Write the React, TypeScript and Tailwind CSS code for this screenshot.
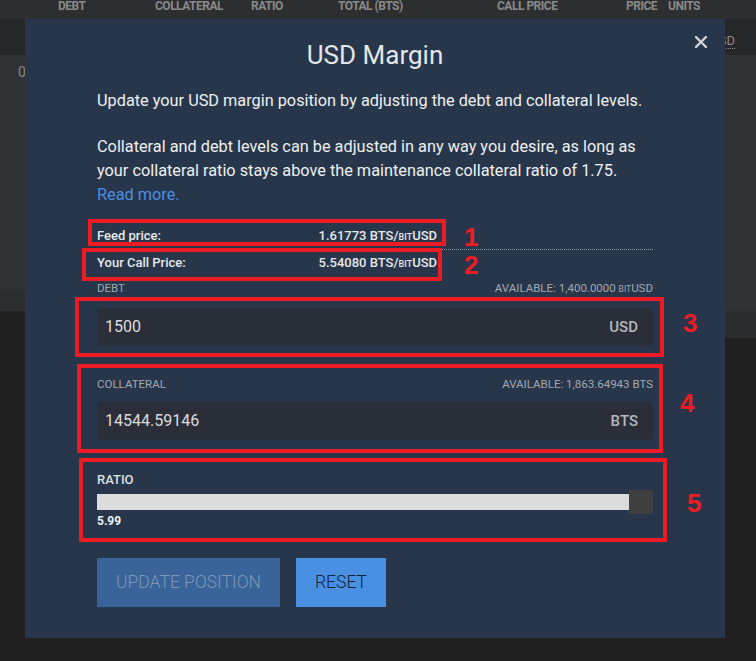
export default function App() {
  const headers: [string, number][] = [
    ["DEBT", 97],
    ["COLLATERAL", 96],
    ["RATIO", 87],
    ["TOTAL (BTS)", 159],
    ["CALL PRICE", 129],
    ["PRICE", 42],
    ["UNITS", 60],
  ];
  return (
    <div className="relative w-[756px] h-[661px] overflow-hidden bg-[#212121] font-['Roboto','Liberation_Sans',sans-serif]">
      {/* background page */}
      <div className="h-[19px] bg-[#2c2e30] flex pl-[58px] text-[12px] leading-[12px] font-bold tracking-[-0.5px] text-[#8a8a8a]">
        {headers.map(([h, w]) => (
          <div key={h} style={{ width: w }} className="shrink-0">
            {h}
          </div>
        ))}
      </div>
      <div className="h-[36px] bg-[#262728] flex justify-end pr-[21px] pt-[14px]">
        <span className="text-[13px] leading-[15px] h-[16px] text-[#8a8a8a] border-b border-dotted border-[#8a8a8a]">USD</span>
      </div>
      <div className="flex h-[283px]">
        <div className="w-[25px] flex flex-col">
          <div className="h-[235px] bg-[#2f3134] pl-[18px] pt-[9px] text-[14px] leading-[16px] text-[#8a8a8a]">0</div>
          <div className="h-[21px] bg-[#2b2d2f]" />
        </div>
        <div className="flex-1 bg-[#2f3134]" />
        <div className="w-[31px] flex flex-col">
          <div className="h-[256px] bg-[#2f3134]" />
          <div className="h-[27px] bg-[#2a2c2e]" />
        </div>
      </div>

      {/* modal */}
      <div className="absolute left-[25px] top-[19px] w-[700px] h-[619px] bg-[#27364a] px-[72px] pt-[20px]">
        <svg className="absolute left-[670px] top-[17px]" width="12" height="12" viewBox="0 0 12 12">
          <path d="M1 1 L11 11 M11 1 L1 11" stroke="#cfd3d8" strokeWidth="2.4" strokeLinecap="square" />
        </svg>
        <h1 className="text-[26px] leading-[32px] text-center text-[#e4e6e8] font-normal">USD Margin</h1>
        <p className="mt-[18px] text-[16.3px] leading-[24px] text-[#eef0f2]">
          Update your USD margin position by adjusting the debt and collateral levels.
        </p>
        <p className="mt-[22px] text-[16.3px] leading-[24px] text-[#eef0f2]">
          Collateral and debt levels can be adjusted in any way you desire, as long as
          <br />
          your collateral ratio stays above the maintenance collateral ratio of 1.75.
          <br />
          <span className="text-[#4a90e2]">Read more.</span>
        </p>

        <div className="mt-[16px] flex justify-between items-center h-[27px] border-b border-dotted border-[#8b96a4] text-[13px] font-medium text-[#e6e8ea]">
          <span>Feed price:</span>
          <span className="pr-[216px]">
            1.61773 BTS/<span className="text-[9px]">BIT</span>USD
          </span>
        </div>
        <div className="flex justify-between items-center h-[26px] text-[13px] font-medium text-[#e6e8ea]">
          <span>Your Call Price:</span>
          <span className="pr-[216px]">
            5.54080 BTS/<span className="text-[9px]">BIT</span>USD
          </span>
        </div>

        <div className="mt-[4px] flex justify-between text-[11.5px] leading-[16px] text-[#a3a9b1]">
          <span>DEBT</span>
          <span>
            AVAILABLE: 1,400.0000 <span className="text-[8.5px]">BIT</span>USD
          </span>
        </div>
        <div className="mt-[11px] h-[38px] rounded-[4px] bg-[#2a2e38] flex items-center justify-between pl-[8px] pr-[15px]">
          <span className="text-[16px] text-[#dadcdf]">1500</span>
          <span className="text-[15px] font-medium text-[#b4b7bb]">USD</span>
        </div>

        <div className="mt-[30px] flex justify-between text-[11.5px] leading-[16px] text-[#a3a9b1]">
          <span>COLLATERAL</span>
          <span>AVAILABLE: 1,863.64943 BTS</span>
        </div>
        <div className="mt-[10px] h-[38px] rounded-[4px] bg-[#2a2e38] flex items-center justify-between pl-[8px] pr-[15px]">
          <span className="text-[16px] text-[#dadcdf]">14544.59146</span>
          <span className="text-[15px] font-medium text-[#b4b7bb]">BTS</span>
        </div>

        <div className="mt-[31px] text-[13px] leading-[18px] font-medium text-[#dde0e3]">RATIO</div>
        <div className="mt-[1px] h-[24px] flex items-center">
          <div className="flex-1 h-[16px] bg-[#dcdcdc]" />
          <div className="w-[24px] h-[24px] bg-[#404040]" />
        </div>
        <div className="text-[12px] leading-[14px] font-bold text-[#eef0f2]">5.99</div>

        <div className="mt-[30px] flex gap-[16px]">
          <button className="h-[49px] w-[183px] bg-[#38649a] text-[17.5px] font-light text-[#7e98b6] uppercase">
            Update Position
          </button>
          <button className="h-[49px] w-[90px] bg-[#4a90e2] text-[17.5px] font-light text-[#10223a] uppercase">
            Reset
          </button>
        </div>

        {/* red annotation boxes */}
        <div className="absolute left-[63px] top-[200px] w-[358px] h-[27px] border-4 border-[#ed1c24]" />
        <div className="absolute left-[57px] top-[229px] w-[360px] h-[33px] border-4 border-[#ed1c24]" />
        <div className="absolute left-[50px] top-[278px] w-[589px] h-[60px] border-4 border-[#ed1c24]" />
        <div className="absolute left-[52px] top-[345px] w-[586px] h-[89px] border-4 border-[#ed1c24]" />
        <div className="absolute left-[54px] top-[439px] w-[588px] h-[84px] border-4 border-[#ed1c24]" />

        <div className="absolute left-[439px] top-[205px] text-[26px] leading-[26px] font-bold text-[#ed1c24] font-['Liberation_Sans',sans-serif]">1</div>
        <div className="absolute left-[439px] top-[233px] text-[26px] leading-[26px] font-bold text-[#ed1c24] font-['Liberation_Sans',sans-serif]">2</div>
        <div className="absolute left-[658px] top-[291px] text-[26px] leading-[26px] font-bold text-[#ed1c24] font-['Liberation_Sans',sans-serif]">3</div>
        <div className="absolute left-[655px] top-[371px] text-[26px] leading-[26px] font-bold text-[#ed1c24] font-['Liberation_Sans',sans-serif]">4</div>
        <div className="absolute left-[662px] top-[471px] text-[26px] leading-[26px] font-bold text-[#ed1c24] font-['Liberation_Sans',sans-serif]">5</div>
      </div>
    </div>
  );
}
